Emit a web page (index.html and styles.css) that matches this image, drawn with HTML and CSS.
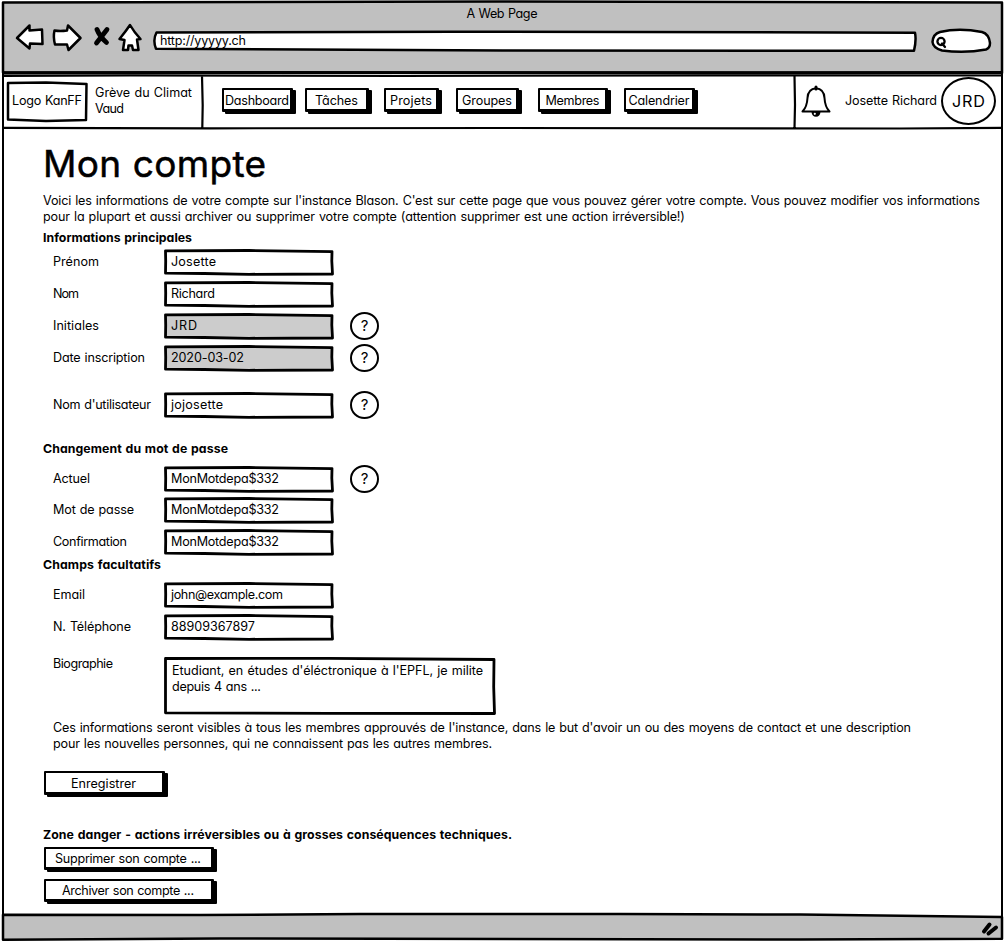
FILE: index.html
```html
<!DOCTYPE html>
<html lang="fr">
<head>
<meta charset="utf-8">
<title>Mon compte</title>
<link rel="stylesheet" href="styles.css">
</head>
<body>
<svg class="defs" aria-hidden="true">
  <symbol id="field" viewBox="0 0 170 26" preserveAspectRatio="none">
    <path d="M1.5 1.800 L85 1.500 L168 2.600 L167.800 12 L168.500 25 L85 25.300 L40 24.500 L1.5 24.2 L1.700 12 Z"/>
  </symbol>
</svg>
<div class="window">
  <header class="chrome">
    <svg class="backdrop" viewBox="0 0 1004 75">
      <path class="grey" d="M3 2.5 L500 1.5 L1002 2.5 L1002 73 L500 72.5 L3 72.5 Z"/>
      <path class="thick" d="M3 73 L200 72.500 L560 72.800 L1002 72.500"/>
    </svg>
    <div class="title"><span data-w="71">A Web Page</span></div>
    <div class="toolbar">
      <svg class="controls" width="150" height="36" viewBox="0 0 150 36">
        <path class="shape" d="M17 19 L29.500 6.500 L29.500 11.500 L42 10.500 L42.500 25 L30 24.500 L29.500 29.500 Z"/>
        <path class="shape" d="M54.500 11.5 Q60 12.500 67 11.500 L68 6.500 L80.5 19 L68.500 31 L67 25.500 L55 25.500 Q53 18 54.500 11.500 Z"/>
        <path class="blob" d="M97 10.500 Q100 18 106.500 23.500 M107 10.500 Q102 17 96.500 24"/>
        <path class="shape" d="M119.500 20 Q126 12 130 6 Q134 13 140.500 20 L137 20.500 L138.500 31 L133 31 L132 26.500 L128.500 26.500 L128 31 L123 31 L124.500 21 Z"/>
      </svg>
      <div class="address">
        <svg class="backdrop" viewBox="0 0 764 22"><path class="shape" d="M3.500 2.500 L300 1.700 L762 2.700 Q763.500 10 761 20.800 L350 20.500 L3 18.800 Q-.5 10 3.500 2.500 Z"/></svg>
        <span data-w="86">http://yyyyy.ch</span>
      </div>
      <svg class="search" width="62" height="26" viewBox="0 0 62 26">
        <path class="shape" d="M9 4 Q28 -.5 51 4 Q58 6 59 15 Q59 20 55 21.500 Q34 25.500 11 22.500 Q2 20 1.500 14 Q2 6 9 4 Z"/>
        <circle class="lens" cx="10" cy="13.500" r="3.600"/><path class="lens" d="M11 15.500 L14 19"/>
      </svg>
    </div>
  </header>

  <nav class="nav">
    <svg class="backdrop" viewBox="0 0 1004 54">
      <path class="line" d="M3 .8 L130 .4 L400 1 L700 .3 L1002 .5 M3 52.800 L210 53.300 L500 53 L900 53.500 L1002 52.800 M202 1 L202.700 30 L202.300 53 M794.500 1 L795 30 L794.500 53"/>
    </svg>
    <div class="brand">
      <div class="logo">
        <svg class="backdrop" viewBox="0 0 82 42"><path class="outline" d="M2 2 L40 1.500 L80.500 3 L80 39 L40 40 L2 38.500 Z"/></svg>
        <span data-w="70">Logo KanFF</span>
      </div>
      <div class="group"><span data-w="97">Grève du Climat</span><br><span data-w="29">Vaud</span></div>
    </div>
    <div class="links">
      <a class="btn dash"><span data-w="64">Dashboard</span></a>
      <a class="btn tach"><span data-w="43">Tâches</span></a>
      <a class="btn proj"><span data-w="42">Projets</span></a>
      <a class="btn grou"><span data-w="50">Groupes</span></a>
      <a class="btn memb"><span data-w="54">Membres</span></a>
      <a class="btn cale"><span data-w="61">Calendrier</span></a>
    </div>
    <div class="user">
      <svg class="bell" width="30" height="34" viewBox="0 0 30 34">
        <path class="ring" d="M1.500 26.500 Q6 22 6.500 13 Q7 4 15 3.300 Q23 4 23.500 13 Q24 22 28.500 26.500 Z"/>
        <path class="knob" d="M15 2 V4"/>
        <path d="M10.500 27 Q11 31.800 15 31.800 Q19 31.800 19.500 27 Z"/>
        <circle class="hole" cx="13.800" cy="28.800" r="1.100"/>
      </svg>
      <span class="name"><span data-w="92">Josette Richard</span></span>
      <div class="avatar"><span data-w="33">JRD</span></div>
    </div>
  </nav>

  <main class="page">
    <h1><span data-w="223">Mon compte</span></h1>
    <p class="intro"><span data-w="937">Voici les informations de votre compte sur l'instance Blason. C'est sur cette page que vous pouvez gérer votre compte. Vous pouvez modifier vos informations</span><br><span data-w="642">pour la plupart et aussi archiver ou supprimer votre compte (attention supprimer est une action irréversible!)</span></p>

    <h2><span data-w="149">Informations principales</span></h2>
    <section class="fields main-info">
      <div class="row"><label><span data-w="46">Prénom</span></label><div class="field"><svg class="backdrop"><use href="#field"/></svg><span data-w="45">Josette</span></div></div>
      <div class="row"><label><span data-w="26">Nom</span></label><div class="field"><svg class="backdrop"><use href="#field"/></svg><span data-w="44">Richard</span></div></div>
      <div class="row"><label><span data-w="46">Initiales</span></label><div class="field locked"><svg class="backdrop"><use href="#field"/></svg><span data-w="26">JRD</span></div><i class="help">?</i></div>
      <div class="row"><label><span data-w="92">Date inscription</span></label><div class="field locked"><svg class="backdrop"><use href="#field"/></svg><span data-w="73">2020-03-02</span></div><i class="help">?</i></div>
      <div class="row login"><label><span data-w="98">Nom d'utilisateur</span></label><div class="field"><svg class="backdrop"><use href="#field"/></svg><span data-w="52">jojosette</span></div><i class="help">?</i></div>
    </section>

    <h2 class="password-title"><span data-w="185">Changement du mot de passe</span></h2>
    <section class="fields password">
      <div class="row"><label><span data-w="37">Actuel</span></label><div class="field"><svg class="backdrop"><use href="#field"/></svg><span data-w="108">MonMotdepa$332</span></div><i class="help">?</i></div>
      <div class="row"><label><span data-w="81">Mot de passe</span></label><div class="field"><svg class="backdrop"><use href="#field"/></svg><span data-w="108">MonMotdepa$332</span></div></div>
      <div class="row"><label><span data-w="74">Confirmation</span></label><div class="field"><svg class="backdrop"><use href="#field"/></svg><span data-w="108">MonMotdepa$332</span></div></div>
    </section>

    <h2 class="optional-title"><span data-w="118">Champs facultatifs</span></h2>
    <section class="fields optional">
      <div class="row"><label><span data-w="32">Email</span></label><div class="field"><svg class="backdrop"><use href="#field"/></svg><span data-w="112">john@example.com</span></div></div>
      <div class="row"><label><span data-w="78">N. Téléphone</span></label><div class="field"><svg class="backdrop"><use href="#field"/></svg><span data-w="84">88909367897</span></div></div>
      <div class="row bio"><label><span data-w="60">Biographie</span></label><div class="field area"><svg class="backdrop" viewBox="0 0 332 58"><path d="M1.500 1.500 L165 1.300 L330 2.500 L329.700 30 L330.500 56.500 L165 56.300 L1.500 55.800 Z"/></svg><span data-w="311">Etudiant, en études d'éléctronique à l'EPFL, je milite</span><br><span data-w="89">depuis 4 ans ...</span></div></div>
    </section>
    <p class="note"><span data-w="858">Ces informations seront visibles à tous les membres approuvés de l'instance, dans le but d'avoir un ou des moyens de contact et une description</span><br><span data-w="439">pour les nouvelles personnes, qui ne connaissent pas les autres membres.</span></p>

    <button class="btn save"><span data-w="65">Enregistrer</span></button>
    <h2 class="danger-title"><span data-w="469">Zone danger - actions irréversibles ou à grosses conséquences techniques.</span></h2>
    <button class="btn wide"><span data-w="146">Supprimer son compte ...</span></button>
    <button class="btn wide archive"><span data-w="132">Archiver son compte ...</span></button>
  </main>

  <footer class="status">
    <svg class="backdrop" viewBox="0 0 1004 32">
      <path class="grey" d="M3 4.800 L200 5 L360 4 L620 4 L800 4.500 L1002 7 L1002 28.800 L800 29.500 L220 28.500 L3 29.700 Z"/>
      <path class="grip" d="M984 21.500 L989.500 14.500 M988.500 23.500 L996 17.500"/>
    </svg>
  </footer>
</div>
<script src="script.js"></script>
</body>
</html>
```
FILE: styles.css
```css
* { box-sizing: border-box; }
body { margin: 0; background: #fff; color: #000; font: 400 12.6px/16px Inter, "Open Sans", sans-serif; font-feature-settings: "cv11"; word-spacing: .7px; }
h1, h2, p { margin: 0; }
span[data-w] { display: inline-block; white-space: pre; }
.defs { position: absolute; width: 0; height: 0; }
.window { position: relative; display: flex; flex-direction: column; width: 1004px; height: 942px; }
.window::before, .window::after { content: ""; position: absolute; top: 2px; bottom: 3px; width: 2.5px; background: #000; }
.window::before { left: 1.5px; }
.window::after { right: 1px; }
.backdrop { position: absolute; inset: 0; width: 100%; height: 100%; z-index: -1; overflow: visible; }
.backdrop path, .shape { fill: #fff; stroke: #000; stroke-width: 2.5; stroke-linejoin: round; }
.backdrop .grey { fill: #c0c0c0; }
.backdrop .thick { fill: none; stroke-width: 3; }
.backdrop .line { fill: none; stroke-width: 2.2; }

.chrome { position: relative; z-index: 0; height: 75px; flex: none; }
.title { padding-top: 6px; height: 22px; text-align: center; }
.toolbar { display: flex; align-items: flex-start; }
.controls { flex: none; margin-top: -3px; }
.address { position: relative; z-index: 0; width: 764px; height: 22px; margin: 8px 0 0 3px; padding: 3px 0 0 7px; }
.search { margin: 6px 0 0 14px; }
.blob { fill: none; stroke: #000; stroke-width: 4.8; stroke-linecap: round; }
.lens { fill: none; stroke: #000; stroke-width: 2.3; stroke-linecap: round; }

.nav { position: relative; z-index: 0; display: flex; height: 54px; flex: none; }
.brand { display: flex; width: 203px; padding: 6px 0 0 6px; }
.logo { position: relative; z-index: 0; width: 82px; height: 42px; padding: 12px 0 0 6px; }
.group { padding: 4px 0 0 7px; }
.links { display: flex; width: 591px; padding: 13px 0 0 19px; }
.btn { display: flex; justify-content: center; align-items: center; height: 23px; padding: 2px 0 0; border: 2px solid #000; border-right-width: 3px; border-bottom-width: 3px; border-radius: 1px; background: #fff; color: #000; font: inherit; word-spacing: inherit; box-shadow: 3px 2px 0 #000; }
.links .btn { flex: none; height: 24px; padding-top: 3px; }
.dash { width: 71px; margin-right: 12px; }
.tach { width: 64px; margin-right: 15px; }
.proj { width: 55px; margin-right: 17px; }
.grou { width: 63px; margin-right: 19px; }
.memb { width: 70px; margin-right: 16px; }
.cale { width: 71px; }
.user { display: flex; padding: 2px 0 0 7px; }
.bell { margin-top: 8px; }
.ring { fill: #fff; stroke: #000; stroke-width: 2; stroke-linejoin: round; }
.knob { stroke: #000; stroke-width: 3; stroke-linecap: round; }
.hole { fill: #fff; }
.name { width: 96px; padding: 16px 0 0 14px; margin-right: 14px; white-space: nowrap; }
.avatar { display: flex; flex: none; align-items: center; justify-content: center; width: 55px; height: 48px; border: 2px solid #000; border-radius: 50%; font-size: 16.200px; }

.page { flex: 1; padding: 13px 0 0 43px; }
h1 { height: 51px; font-size: 37px; font-weight: 400; line-height: 44px; -webkit-text-stroke: .5px #000; }
h2 { height: 16px; font-size: 12.300px; font-weight: 700; line-height: 16px; }
.intro { height: 37px; }
.fields { display: flex; flex-direction: column; gap: 6px; padding: 3px 0 0 10px; }
.row { display: flex; height: 26px; flex: none; }
label { width: 111px; padding-top: 5px; white-space: nowrap; }
.field { position: relative; z-index: 0; width: 170px; padding: 5px 0 0 7px; }
.area path, symbol path { fill: var(--paper, #fff); stroke: #000; stroke-width: 2.800; stroke-linejoin: round; }
#field { overflow: visible; }
.locked { --paper: #ccc; }
.help { display: flex; align-items: center; justify-content: center; width: 29px; height: 28px; margin: -1px 0 0 16px; border: 2px solid #000; border-radius: 50%; font-size: 15px; font-style: normal; }
.login { margin-top: 15px; }
.password-title { margin-top: 23px; }
.password { gap: 5.500px; padding-top: 9px; }
.password .row:nth-child(2) { margin-top: -.5px; margin-bottom: .5px; }
.optional-title { margin-top: 2px; }
.optional { padding-top: 9px; }
.bio { height: 58px; margin-top: 11px; }
.bio label { margin-top: -1px; padding-top: 0; }
.area { width: 332px; padding-top: 6px; padding-left: 8px; }
.note { padding: 5px 0 0 10px; height: 56px; }
.save { width: 121px; height: 24px; margin-left: .5px; }
.danger-title { margin-top: 32px; }
.wide { width: 170px; margin: 4px 0 0 .5px; }
.archive { margin-top: 9px; }

.status { position: relative; z-index: 0; height: 32px; flex: none; }
.backdrop .grip { stroke-width: 4; stroke-linecap: round; }
```
FILE: script.js
```js
// Tracks each label so that it fills its nominal width in the wireframe.
document.querySelectorAll("span[data-w]").forEach(function (el) {
  var target = Number(el.dataset.w);
  var gap = (target - el.getBoundingClientRect().width) / Math.max(1, el.textContent.length - 1);
  el.style.letterSpacing = gap.toFixed(3) + "px";
  el.style.marginRight = (-gap).toFixed(3) + "px";
});
```
